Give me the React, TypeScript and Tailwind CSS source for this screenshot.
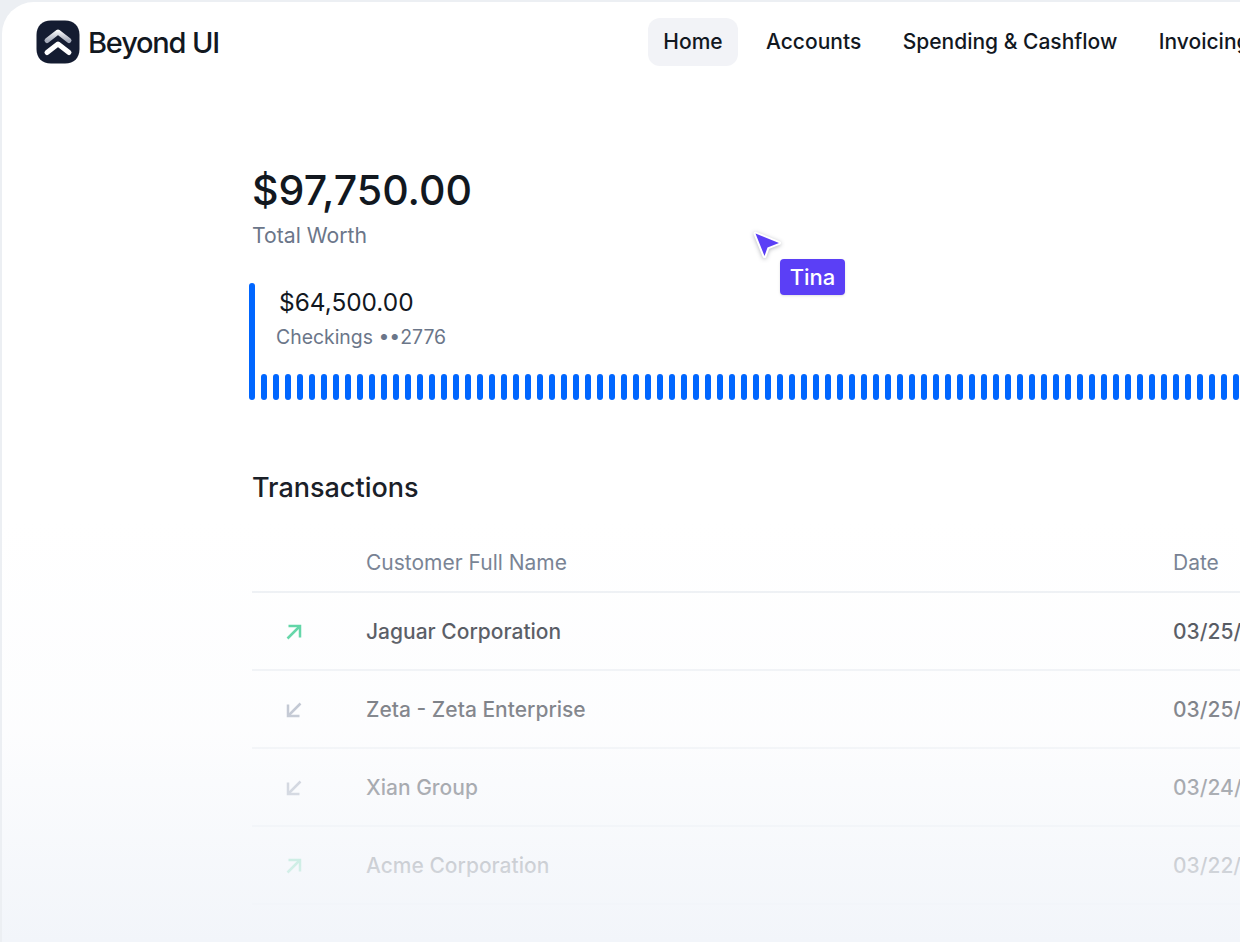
import React from 'react';

const navItems = ['Accounts', 'Spending & Cashflow', 'Invoicing'];

const rows = [
  { name: 'Jaguar Corporation', date: '03/25/2024', up: true },
  { name: 'Zeta - Zeta Enterprise', date: '03/25/2024', up: false },
  { name: 'Xian Group', date: '03/24/2024', up: false },
  { name: 'Acme Corporation', date: '03/22/2024', up: true },
];

const bars = Array.from({ length: 82 }, (_, i) => i);

function Logo() {
  return (
    <svg width="44" height="44" viewBox="0 0 44 44" fill="none">
      <defs>
        <linearGradient id="chev" x1="0" y1="10" x2="0" y2="21" gradientUnits="userSpaceOnUse">
          <stop offset="0" stopColor="#ffffff" />
          <stop offset="1" stopColor="#a4aab9" />
        </linearGradient>
      </defs>
      <path d="M15 .5h14C38 .5 43.500 6 43.500 15v14C43.500 38 38 43.500 29 43.500H15C6 43.500 .5 38 .5 29V15C.5 6 6 .5 15 .5z" fill="#141c31" />
      <path d="M11 20.500 22 12l11 8.500" stroke="url(#chev)" strokeWidth="5" strokeLinecap="round" strokeLinejoin="round" />
      <path d="M11 32.500 22 24l11 8.500" stroke="#ffffff" strokeWidth="5" strokeLinecap="round" strokeLinejoin="round" />
    </svg>
  );
}

function Arrow({ up }: { up: boolean }) {
  return (
    <svg width="18" height="18" viewBox="0 0 18 18" fill="none" stroke={up ? '#2fc98a' : '#98a1b3'} strokeWidth="2.500">
      {up ? (
        <>
          <path d="M2.500 15.500 15 3" />
          <path d="M3.500 3H15v11.500" />
        </>
      ) : (
        <>
          <path d="M15.500 2.500 3 15" />
          <path d="M3 3.500V15h11.500" />
        </>
      )}
    </svg>
  );
}

export default function App() {
  return (
    <div className="w-[1240px] h-[942px] overflow-hidden bg-[#eceff3] font-['Inter',sans-serif] text-[#12181f]">
      <div className="relative w-[1300px] h-[960px] ml-[2px] mt-[2px] bg-white rounded-tl-[32px]">
        <header className="flex items-center h-[64px] pt-[8px] box-content">
          <div className="flex shrink-0 items-center gap-[8px] ml-[34px] w-[612px]">
            <Logo />
            <span className="text-[29px] font-medium tracking-[-1.200px] leading-none">Beyond UI</span>
          </div>
          <nav className="flex items-center whitespace-nowrap text-[21px] font-medium">
            <a className="w-[90px] text-center py-[10px] rounded-[12px] bg-[#f2f3f7] leading-[28px] mr-[12px]">Home</a>
            {navItems.map((item) => (
              <a key={item} className="px-[16px] py-[10px] leading-[28px] mr-[9.500px]">{item}</a>
            ))}
          </nav>
        </header>

        <main className="ml-[250px]">
          <div className="mt-[86px] text-[41.100px] font-medium leading-[60px]">$97,750.00</div>
          <div className="text-[21.200px] leading-[30px] text-[#6b7689]">Total Worth</div>

          <div className="relative mt-[33px] ml-[-3px] h-[117px] w-[1100px]">
            <div className="flex flex-col pl-[27px]">
              <div className="pl-[3px] pt-[1px] pb-[1px] text-[24.400px] leading-[36px]">$64,500.00</div>
              <div className="text-[19.400px] leading-[32px] text-[#6b7689]">Checkings ••2776</div>
            </div>
            <div className="absolute left-0 bottom-0 flex items-end gap-[6px]">
              <div className="w-[6px] h-[117px] rounded-full bg-[#0066ff]" />
              {bars.map((b) => (
                <div key={b} className="w-[6px] h-[26px] rounded-full bg-[#0066ff]" />
              ))}
            </div>
          </div>

          <h2 className="mt-[68px] text-[27px] leading-[40px] font-medium text-[#1a2028]">Transactions</h2>

          <div className="mt-[25px]">
            <div className="grid grid-cols-[114px_807px_1fr] items-center h-[60px] pt-[1px] border-b-2 border-[#eceff3] text-[21px] text-[#6b7689]">
              <div />
              <div>Customer Full Name</div>
              <div>Date</div>
            </div>
            {rows.map((r) => (
              <div key={r.name} className="grid grid-cols-[114px_807px_1fr] items-center h-[78px] pt-[2px] border-b-2 border-[#eceff3] text-[21px] font-medium text-[#1f2630]">
                <div className="pl-[33px] flex"><Arrow up={r.up} /></div>
                <div>{r.name}</div>
                <div>{r.date}</div>
              </div>
            ))}
          </div>
        </main>

        {/* tina's cursor */}
        <div className="absolute left-[748px] top-[226px] drop-shadow-[0_1px_2px_rgba(17,24,39,0.3)]">
          <svg width="34" height="34" viewBox="0 0 34 34" fill="none">
            <path d="M5.500 5.500 29 15 17.500 19.500 14.500 28z" fill="#5b3ff6" stroke="#ffffff" strokeWidth="4" strokeLinejoin="round" paintOrder="stroke" />
          </svg>
        </div>
        <div className="absolute left-[778px] top-[257px] h-[36px] w-[65px] flex items-center justify-center rounded-[4px] bg-[#5b3ff6] text-white text-[22px] font-medium shadow-sm">Tina</div>

        {/* fade at the bottom */}
        <div className="absolute left-0 right-0 top-[518px] h-[422px] pointer-events-none bg-linear-to-b from-[#ffffff00] via-[#fafbfd80] via-50% to-[#f2f5fa]" />
      </div>
    </div>
  );
}
